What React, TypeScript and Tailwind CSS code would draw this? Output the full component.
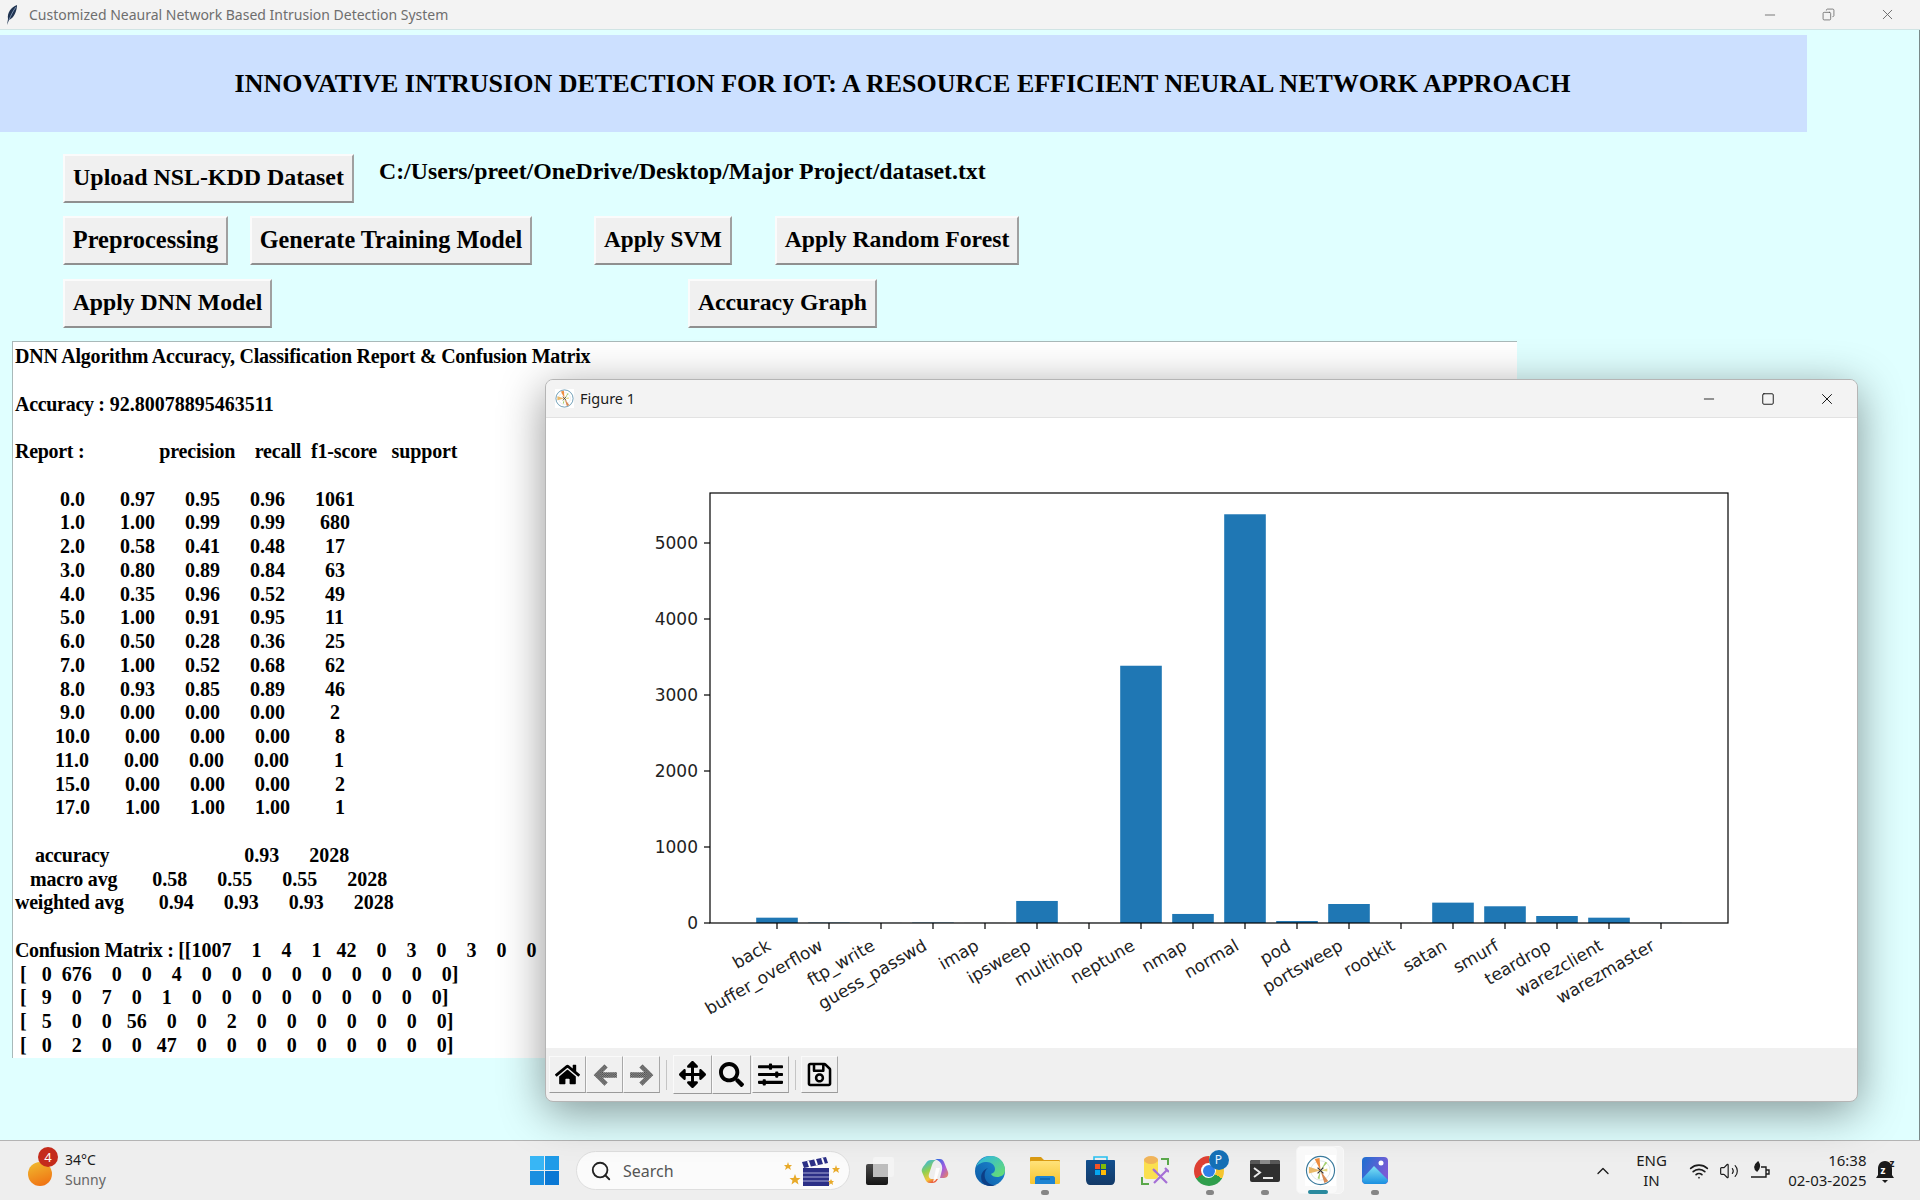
import React from 'react';
import { FaHome, FaArrowsAlt, FaSearch, FaSlidersH, FaRegSave } from 'react-icons/fa';
import { Search, Wifi, Volume2, ChevronUp, Minus, Square, X, Copy } from 'lucide-react';

const CLASS_ROWS = `         0.0       0.97      0.95      0.96      1061
         1.0       1.00      0.99      0.99       680
         2.0       0.58      0.41      0.48        17
         3.0       0.80      0.89      0.84        63
         4.0       0.35      0.96      0.52        49
         5.0       1.00      0.91      0.95        11
         6.0       0.50      0.28      0.36        25
         7.0       1.00      0.52      0.68        62
         8.0       0.93      0.85      0.89        46
         9.0       0.00      0.00      0.00         2
        10.0       0.00      0.00      0.00         8
        11.0       0.00      0.00      0.00         1
        15.0       0.00      0.00      0.00         2
        17.0       1.00      1.00      1.00         1`;

const MATRIX_ROWS = ` [   0  676    0    0    4    0    0    0    0    0    0    0    0    0]
 [   9    0    7    0    1    0    0    0    0    0    0    0    0    0]
 [   5    0    0   56    0    0    2    0    0    0    0    0    0    0]
 [   0    2    0    0   47    0    0    0    0    0    0    0    0    0]`;

const ATTACKS: [string, number][] = [
  ['back', 70], ['buffer_overflow', 5], ['ftp_write', 1], ['guess_passwd', 5], ['imap', 1], ['ipsweep', 290],
  ['multihop', 1], ['neptune', 3385], ['nmap', 119], ['normal', 5378], ['pod', 26], ['portsweep', 250],
  ['rootkit', 1], ['satan', 268], ['smurf', 220], ['teardrop', 92], ['warezclient', 70], ['warezmaster', 2],
];

const TkButton = ({ label, className }: { label: string; className: string }) => (
  <button className={`h-[49px] shrink-0 pb-[1px] bg-[#f0f0f0] border-2 border-t-[#fbfbfb] border-l-[#fbfbfb] border-r-[#a0a0a0] border-b-[#8f8f8f] text-center leading-none font-bold text-black whitespace-nowrap ${className}`}>
    {label}
  </button>
);

const ReportText = () => (
  <pre className="font-['Liberation_Serif',serif] text-[20px] leading-[23.75px] font-bold text-black whitespace-pre">
    <span className="tracking-[-0.23px]">DNN Algorithm Accuracy, Classification Report &amp; Confusion Matrix</span>
    {'\n\n'}
    <span className="tracking-[-0.3px]">Accuracy :</span> 92.80078895463511
    {'\n\n'}
    <span className="tracking-[-0.3px]">Report :</span>
    {'               '}
    <span className="tracking-[-0.15px]">precision    recall  f1-score   support</span>
    {'\n\n'}
    {CLASS_ROWS}
    {'\n\n    '}
    <span className="tracking-[-0.3px]">accuracy</span>
    {'                           0.93      2028\n   '}
    <span className="tracking-[-0.2px]">macro avg</span>
    {'       0.58      0.55      0.55      2028\n'}
    <span className="tracking-[-0.25px]">weighted avg</span>
    {'       0.94      0.93      0.93      2028\n\n'}
    <span className="tracking-[-0.33px]">Confusion Matrix : </span>
    {'[[1007    1    4    1   42    0    3    0    3    0    0    0    0    0]\n'}
    {MATRIX_ROWS}
  </pre>
);

const BarChart = () => {
  const x0 = 231;
  const base = 505;
  const perUnit = 0.076;
  return (
    <svg width="1311" height="630" className="block font-['DejaVu_Sans',sans-serif]">
      {ATTACKS.map(([name, value], i) => {
        const x = x0 + i * 52;
        return (
          <g key={name}>
            <rect x={x - 20.8} y={base - value * perUnit} width="41.6" height={value * perUnit} fill="#1f77b4" />
            <line x1={x} x2={x} y1={base} y2={base + 6} stroke="#000" strokeWidth="1.2" />
            <text x={x - 5} y={base + 26} textAnchor="end" fontSize="17" fill="#222" transform={`rotate(-30 ${x - 5} ${base + 26})`}>
              {name}
            </text>
          </g>
        );
      })}
      {[0, 1000, 2000, 3000, 4000, 5000].map((tick) => (
        <g key={tick}>
          <line x1="158" x2="164" y1={base - tick * perUnit} y2={base - tick * perUnit} stroke="#000" strokeWidth="1.2" />
          <text x="152" y={base - tick * perUnit + 6} textAnchor="end" fontSize="17" fill="#222">{tick}</text>
        </g>
      ))}
      <rect x="164" y="75" width="1018" height="430" fill="none" stroke="#000" strokeWidth="1.2" />
    </svg>
  );
};

const MplLogo = ({ size }: { size: number }) => (
  <svg width={size} height={size} viewBox="0 0 32 32">
    <rect width="32" height="32" fill="#fff" />
    <circle cx="16" cy="16" r="14.5" fill="none" stroke="#3a7a9c" strokeWidth="1.2" />
    <circle cx="16" cy="16" r="10" fill="none" stroke="#c5d5dd" strokeWidth="0.6" />
    <path d="M16 16 L10 4 L15 3 Z" fill="#ee8d3f" />
    <path d="M16 16 L4 12 L4 19 Z" fill="#e9b96a" />
    <path d="M16 16 L24 27 L20 29 Z" fill="#d78a55" />
    <path d="M16 16 L21 7 L23 8 Z" fill="#a5cf6f" />
    <path d="M16 16 L13 24 L15 25 Z" fill="#a5cf6f" />
    <path d="M16 16 L23 14 L23 17 Z" fill="#e4d67a" />
    <path d="M13 19 L19 13 M13 13 L19 19" stroke="#333" strokeWidth="1.2" />
  </svg>
);

const ToolButton = ({ children, wide }: { children: React.ReactNode; wide?: boolean }) => (
  <div className={`flex items-center justify-center bg-[#f0f0f0] border border-t-[#fafafa] border-l-[#fafafa] border-r-[#a8a8a8] border-b-[#9a9a9a] ${wide ? 'w-[39px] h-[39px]' : 'w-[37px] h-[37px]'}`}>
    {children}
  </div>
);

const DitherArrow = ({ flip }: { flip?: boolean }) => (
  <svg width="26" height="26" viewBox="0 0 24 24" className={flip ? '-scale-x-100' : ''}>
    <defs>
      <pattern id="dither" width="2" height="2" patternUnits="userSpaceOnUse">
        <rect width="2" height="2" fill="#999" />
        <rect width="1" height="1" fill="#444" />
        <rect x="1" y="1" width="1" height="1" fill="#444" />
      </pattern>
    </defs>
    <path d="M11.500 2 L1.500 12 L11.500 22 L14.500 19 L10 14.500 H23 V9.500 H10 L14.500 5 Z" fill="url(#dither)" />
  </svg>
);

const FigureWindow = () => (
  <div className="absolute left-[545px] top-[349px] w-[1313px] h-[723px] rounded-[8px] overflow-hidden border border-[#b5b5b5] bg-[#f0f0f0] shadow-[0_10px_45px_rgba(0,0,0,0.42)] flex flex-col">
    <div className="h-[38px] shrink-0 bg-[#f3f3f3] border-b border-[#e2e2e2] flex items-center pl-[9px] font-['Noto_Sans',sans-serif] text-[14.500px] text-[#1a1a1a]">
      <MplLogo size={19} />
      <span className="ml-[6px]">Figure 1</span>
      <div className="ml-auto flex items-center text-[#111]">
        <span className="w-[59px] flex justify-center"><Minus size={16} strokeWidth={1.3} /></span>
        <span className="w-[59px] flex justify-center"><Square size={14} strokeWidth={1.6} /></span>
        <span className="w-[59px] mr-[1px] flex justify-center"><X size={18} strokeWidth={1.3} /></span>
      </div>
    </div>
    <div className="h-[630px] shrink-0 bg-white">
      <BarChart />
    </div>
    <div className="flex-1 flex items-center pl-[3px]">
      <ToolButton><FaHome size={25} color="#000" /></ToolButton>
      <ToolButton><DitherArrow /></ToolButton>
      <ToolButton><DitherArrow flip /></ToolButton>
      <div className="w-px h-[30px] bg-[#c4c4c4] ml-[6px] mr-[6px]" />
      <ToolButton wide><FaArrowsAlt size={27} color="#000" /></ToolButton>
      <ToolButton wide><FaSearch size={25} color="#000" /></ToolButton>
      <div className="ml-[1px]"><ToolButton><FaSlidersH size={25} color="#000" /></ToolButton></div>
      <div className="w-px h-[30px] bg-[#c4c4c4] ml-[6px] mr-[5px]" />
      <ToolButton><FaRegSave size={27} color="#000" /></ToolButton>
    </div>
  </div>
);

const TaskView = () => (
  <svg width="30" height="30" viewBox="0 0 30 30">
    <defs>
      <linearGradient id="tv1" x1="0" y1="0" x2="0" y2="1">
        <stop offset="0" stopColor="#4a4a4a" /><stop offset="1" stopColor="#151515" />
      </linearGradient>
    </defs>
    <rect x="1" y="8" width="22" height="21" rx="2" fill="url(#tv1)" />
    <rect x="8" y="1" width="21" height="20" rx="2" fill="#f4f4f4" fillOpacity="0.92" />
    <rect x="8" y="8" width="15" height="13" fill="#bdbdbd" />
  </svg>
);

const Copilot = () => (
  <svg width="28" height="26" viewBox="0 0 28 26">
    <defs>
      <linearGradient id="cop1" x1="0" y1="0" x2="1" y2="1">
        <stop offset="0" stopColor="#1f6fe0" /><stop offset="0.55" stopColor="#a35be0" /><stop offset="1" stopColor="#f08a50" />
      </linearGradient>
      <linearGradient id="cop2" x1="0.2" y1="0" x2="0.6" y2="1">
        <stop offset="0" stopColor="#35b5e8" /><stop offset="0.45" stopColor="#8fd04f" /><stop offset="0.8" stopColor="#f5c53a" /><stop offset="1" stopColor="#ea5a3a" />
      </linearGradient>
    </defs>
    <path d="M14 1h5c2 0 3 1 4 3l4 10c1 3-1 6-4 6h-4l2-8c1-4-1-9-7-11z" fill="url(#cop1)" />
    <path d="M5 5c1-2 3-3 5-3h5c-2 1-3 2-4 5l-3 9c-1 3 1 5 3 5h6c-2 3-3 4-6 4H9c-3 0-4-2-5-4L1 14c-1-3 1-5 4-9z" fill="url(#cop2)" />
    <path d="M15 10h4l-3 10c-1 2-2 3-4 4l1-4z" fill="#fff" fillOpacity="0.85" />
  </svg>
);

const Edge = () => (
  <svg width="30" height="30" viewBox="0 0 30 30">
    <defs>
      <linearGradient id="edge1" x1="0" y1="1" x2="1" y2="0">
        <stop offset="0" stopColor="#0c59a4" /><stop offset="1" stopColor="#1f8fd8" />
      </linearGradient>
      <linearGradient id="edge2" x1="0" y1="0" x2="1" y2="1">
        <stop offset="0" stopColor="#2bb3e8" /><stop offset="1" stopColor="#6be06a" />
      </linearGradient>
    </defs>
    <circle cx="15" cy="15" r="15" fill="url(#edge1)" />
    <path d="M1 11C4 3 11 0 16 0c8 0 14 6 14 14 0 5-4 7-8 7-3 0-5-1-6-3 3-1 4-3 4-5 0-4-4-7-8-7-5 0-9 2-11 5z" fill="url(#edge2)" />
    <path d="M13 12c-3 2-4 6-3 10 1 4 6 8 11 7-5 2-10 1-13-2-3-4-3-12 5-15z" fill="#0d3f86" />
  </svg>
);

const Folder = () => (
  <svg width="30" height="27" viewBox="0 0 30 27">
    <defs>
      <linearGradient id="fold1" x1="0" y1="0" x2="0" y2="1">
        <stop offset="0" stopColor="#ffe27a" /><stop offset="1" stopColor="#f9c52e" />
      </linearGradient>
    </defs>
    <path d="M1 0h10l3 3h15c.5 0 1 .5 1 1v3H0V1c0-.5.5-1 1-1z" fill="#d99a12" />
    <rect y="4" width="30" height="23" rx="1" fill="url(#fold1)" />
    <path d="M5 21c0-1 1-2 2-2h16c1 0 2 1 2 2v6H5z" fill="#1e84d2" />
    <path d="M10 22h10" stroke="#0b5a9e" strokeWidth="1.2" />
  </svg>
);

const Store = () => (
  <svg width="29" height="29" viewBox="0 0 29 29">
    <defs>
      <linearGradient id="store1" x1="0" y1="0" x2="0" y2="1">
        <stop offset="0" stopColor="#114f8e" /><stop offset="1" stopColor="#133a68" />
      </linearGradient>
    </defs>
    <path d="M8 5V1h13v4" fill="none" stroke="#27c0f0" strokeWidth="1.6" />
    <path d="M0 5c0-.5.5-1 1-1h27c.5 0 1 .5 1 1v19c0 3-2 5-4 5H4c-2 0-4-2-4-5z" fill="url(#store1)" />
    <rect x="9" y="8" width="5" height="5" fill="#f35325" />
    <rect x="15" y="8" width="5" height="5" fill="#81bc06" />
    <rect x="9" y="14" width="5" height="5" fill="#05a6f0" />
    <rect x="15" y="14" width="5" height="5" fill="#ffba08" />
  </svg>
);

const SnipTool = () => (
  <svg width="28" height="29" viewBox="0 0 28 29">
    <path d="M20 3h7v6M1 21v7h7" fill="none" stroke="#5aa84a" strokeWidth="2" />
    <rect x="3" y="2" width="14" height="21" rx="3" fill="#fbe04f" />
    <ellipse cx="10" cy="4" rx="7" ry="4" fill="#f0b45a" />
    <path d="M13 14l13 13M26 14L13 27" stroke="#a56fd6" strokeWidth="2.200" />
    <path d="M24 12l4 4M12 13l3 3" stroke="#a56fd6" strokeWidth="2.200" />
  </svg>
);

const Chrome = () => (
  <div className="relative w-[37px] h-[30px]">
    <div className="absolute left-[2px] top-0 w-[30px] h-[30px] rounded-full bg-[conic-gradient(#f5c52e_0deg_120deg,#2f9e4c_120deg_240deg,#dd4033_240deg_360deg)] flex items-center justify-center">
      <div className="w-[15px] h-[15px] rounded-full bg-white flex items-center justify-center">
        <div className="w-[12px] h-[12px] rounded-full bg-[#2f7fe8]" />
      </div>
    </div>
    <div className="absolute left-[17px] -top-[6px] w-[20px] h-[20px] rounded-full bg-[#156fb5] text-[#e8f4ff] text-[12px] leading-[20px] text-center font-['Noto_Sans',sans-serif]">P</div>
  </div>
);

const Terminal = () => (
  <svg width="30" height="22" viewBox="0 0 30 22">
    <rect width="30" height="22" rx="2" fill="#2f2f2f" />
    <path d="M2 0h8v4H0V2c0-1 1-2 2-2z" fill="#575757" />
    <rect x="10" width="10" height="4" fill="#8a8a8a" />
    <path d="M20 0h8c1 0 2 1 2 2v2H20z" fill="#575757" />
    <path d="M4 8l6 4.500-6 4.500" fill="none" stroke="#e8e8e8" strokeWidth="2" />
    <path d="M13 18h10" stroke="#e8e8e8" strokeWidth="2" />
  </svg>
);

const Photos = () => (
  <svg width="26" height="27" viewBox="0 0 26 27">
    <defs>
      <linearGradient id="ph1" x1="0" y1="0" x2="1" y2="0.4">
        <stop offset="0" stopColor="#1c6fd0" /><stop offset="1" stopColor="#7a5cd6" />
      </linearGradient>
      <linearGradient id="ph2" x1="0" y1="0" x2="0" y2="1">
        <stop offset="0" stopColor="#7fe2f5" /><stop offset="1" stopColor="#1a8fe0" />
      </linearGradient>
    </defs>
    <rect width="26" height="27" rx="4" fill="url(#ph1)" />
    <circle cx="19" cy="6" r="2.500" fill="#fff" />
    <path d="M0 22L12 9l14 14c0 2-2 4-4 4H4c-2 0-4-2-4-5z" fill="url(#ph2)" />
  </svg>
);

const Clapper = () => (
  <svg width="58" height="30" viewBox="0 0 58 30">
    <rect x="19" y="12" width="26" height="18" fill="#2b2f86" />
    <path d="M19 17h26M19 21h26M19 25h26" stroke="#a9acd8" strokeWidth="1.2" />
    <path d="M18 6L42 1l2 6-24 5z" fill="#2b2f86" />
    <path d="M24 5l2 6M31 3l2 6M38 2l2 6" stroke="#fff" strokeWidth="2" />
    <path d="M4 6l1 3h3l-2 2 1 3-3-2-3 2 1-3-2-2h3z" fill="#e8aa2a" />
    <path d="M11 18l1.500 4h4l-3 2.500 1 4-3.500-2.500-3.500 2.500 1-4-3-2.500h4z" fill="#e8aa2a" />
    <path d="M52 9l1 3h3l-2 2 1 3-3-2-3 2 1-3-2-2h3z" fill="#e8aa2a" />
    <path d="M47 23l1 2h2l-1.500 1.500 .5 2.500-2-1.500-2 1.500 .5-2.500-1.500-1.500h2z" fill="#e8aa2a" />
  </svg>
);

const Tile = ({ children, dot, active }: { children: React.ReactNode; dot?: boolean; active?: boolean }) => (
  <div className="relative w-[55px] h-[59px] flex items-center justify-center">
    {active && <div className="absolute left-[4px] top-[5px] w-[47px] h-[48px] rounded-[5px] bg-[#f4f4f4] border border-[#f8f8f8]" />}
    {active && <div className="absolute left-[3px] top-[5px] w-[42px] h-[48px] rounded-[5px] bg-[#f9f9f9] border border-[#f4f4f4]" />}
    <div className="relative">{children}</div>
    {dot && <div className="absolute left-[23.500px] bottom-[5px] w-[8px] h-[5px] rounded-full bg-[#858585]" />}
    {active && <div className="absolute left-[15px] bottom-[6px] w-[20px] h-[4px] rounded-full bg-[#2a8a9e]" />}
  </div>
);

const Taskbar = () => (
  <div className="h-[60px] shrink-0 bg-[#eeeeee] border-t border-[#b4b4b4] flex items-center font-['Noto_Sans',sans-serif] text-[#1b1b1b]">
    <div className="w-[530px] shrink-0 flex items-center pl-[28px]">
      <div className="relative w-[24px] h-[24px] mt-[6px]">
        <div className="w-full h-full rounded-full bg-[linear-gradient(160deg,#f0bd30,#f06a10)]" />
        <div className="absolute left-[10px] -top-[15px] w-[20px] h-[20px] rounded-full bg-[#c42b1c] text-white text-[13px] leading-[20px] text-center">4</div>
      </div>
      <div className="ml-[13px] -mt-[2px] text-[14px] leading-[20px]">
        <div>34°C</div>
        <div className="text-[#666]">Sunny</div>
      </div>
    </div>
    <svg width="29" height="29" viewBox="0 0 29 29" className="shrink-0">
      <rect width="14" height="14" fill="#38b6f5" />
      <rect x="15" width="14" height="14" fill="#1f9be8" />
      <rect y="15" width="14" height="14" fill="#1a8fe0" />
      <rect x="15" y="15" width="14" height="14" fill="#0a78d4" />
    </svg>
    <div className="ml-[17px] w-[274px] h-[39px] shrink-0 rounded-full bg-[#fbfbfb] border border-[#dedede] flex items-center pl-[13px] pr-[7px]">
      <Search size={22} strokeWidth={2} color="#222" />
      <span className="ml-[11px] text-[16px] text-[#555]">Search</span>
      <div className="ml-auto"><Clapper /></div>
    </div>
    <div className="ml-[2.500px] flex">
      <Tile><TaskView /></Tile>
      <Tile><Copilot /></Tile>
      <Tile><Edge /></Tile>
      <Tile dot><Folder /></Tile>
      <Tile><Store /></Tile>
      <Tile><SnipTool /></Tile>
      <Tile dot><Chrome /></Tile>
      <Tile dot><Terminal /></Tile>
      <Tile active><MplLogo size={31} /></Tile>
      <Tile dot><Photos /></Tile>
    </div>
    <div className="ml-[185px] w-[30px] flex justify-center"><ChevronUp size={20} strokeWidth={1.6} /></div>
    <div className="w-[68px] -mt-[1px] text-center text-[15px] leading-[20px]">
      <div>ENG</div>
      <div>IN</div>
    </div>
    <div className="w-[26px] flex justify-center"><Wifi size={20} strokeWidth={2} /></div>
    <div className="w-[34px] flex justify-center"><Volume2 size={20} strokeWidth={1.4} /></div>
    <div className="w-[28px] flex justify-center">
      <svg width="22" height="20" viewBox="0 0 22 20" fill="none" stroke="#1b1b1b" strokeWidth="1.4">
        <path d="M2 16h15V6h-5M17 9h3v4h-3" />
        <path d="M9 1c2 3 2 6-1 9-3-2-3-6 1-9z" fill="#1b1b1b" />
      </svg>
    </div>
    <div className="w-[93px] -mt-[1px] text-right text-[15px] leading-[20px]">
      <div>16:38</div>
      <div>02-03-2025</div>
    </div>
    <div className="ml-[9px] relative w-[22px] h-[26px]">
      <svg width="18" height="26" viewBox="0 0 18 26">
        <path d="M9 3c5 0 7 4 7 8v6l2 3H0l2-3v-6c0-4 2-8 7-8z" fill="#1b1b1b" />
        <path d="M6 22h6l-3 3z" fill="#1b1b1b" />
      </svg>
      <span className="absolute left-[5px] top-[6px] text-[10px] leading-[12px] font-bold text-white">z</span>
      <span className="absolute left-[14px] -top-[1px] text-[10px] leading-[12px] font-bold text-[#1b1b1b]">z</span>
    </div>
  </div>
);

export default function App() {
  return (
    <div className="w-[1920px] h-[1200px] overflow-hidden flex flex-col bg-[#e0ffff]">
      <div className="h-[30px] shrink-0 bg-[#f3f3f3] border-b border-[#d0e4e4] flex items-center pl-[5px] font-['Noto_Sans',sans-serif] text-[14px] text-[#6e6e6e]">
        <svg width="14" height="22" viewBox="0 0 14 22">
          <path d="M12 1C6 3 2 9 3 15l-1 6 2-5c5-2 8-9 8-15z" fill="#1f3350" />
          <path d="M11 3C8 7 6 11 4 16" stroke="#8fa6c4" strokeWidth="0.8" fill="none" />
        </svg>
        <span className="ml-[10px]">Customized Neaural Network Based Intrusion Detection System</span>
        <div className="ml-auto flex items-center text-[#666]">
          <span className="w-[59px] flex justify-center"><Minus size={16} strokeWidth={1.3} /></span>
          <span className="w-[59px] flex justify-center"><Copy size={13} strokeWidth={1.5} className="-scale-x-100" /></span>
          <span className="w-[59px] mr-[3px] flex justify-center"><X size={17} strokeWidth={1.3} /></span>
        </div>
      </div>

      <div className="relative flex-1 border-r border-[#7a8a8a] font-['Liberation_Serif',serif]">
        <div className="mt-[5px] w-[1807px] h-[97px] bg-[#cce0ff] flex items-center justify-center pr-[2px] text-[26px] font-bold text-black">
          INNOVATIVE INTRUSION DETECTION FOR IOT: A RESOURCE EFFICIENT NEURAL NETWORK APPROACH
        </div>

        <div className="mt-[22px] ml-[63px] flex">
          <TkButton label="Upload NSL-KDD Dataset" className="w-[291px] text-[23.900px]" />
          <div className="ml-[25px] mt-[3px] text-[23.800px] leading-[28px] font-bold text-black">
            C:/Users/preet/OneDrive/Desktop/Major Project/dataset.txt
          </div>
        </div>
        <div className="mt-[13px] ml-[63px] flex">
          <TkButton label="Preprocessing" className="w-[165px] text-[24.400px]" />
          <TkButton label="Generate Training Model" className="ml-[22px] w-[282px] text-[24.200px]" />
          <TkButton label="Apply SVM" className="ml-[62px] w-[138px] text-[23.200px]" />
          <TkButton label="Apply Random Forest" className="ml-[43px] w-[244px] text-[23.700px]" />
        </div>
        <div className="mt-[14px] ml-[63px] flex">
          <TkButton label="Apply DNN Model" className="w-[209px] text-[23.700px]" />
          <TkButton label="Accuracy Graph" className="ml-[416px] w-[189px] text-[23.700px]" />
        </div>

        <div className="mt-[13px] ml-[12px] w-[1505px] h-[717px] bg-white border-t border-l border-[#a9b9b9] overflow-hidden pl-[2px] pt-[3px]">
          <ReportText />
        </div>

        <FigureWindow />
      </div>

      <Taskbar />
    </div>
  );
}
